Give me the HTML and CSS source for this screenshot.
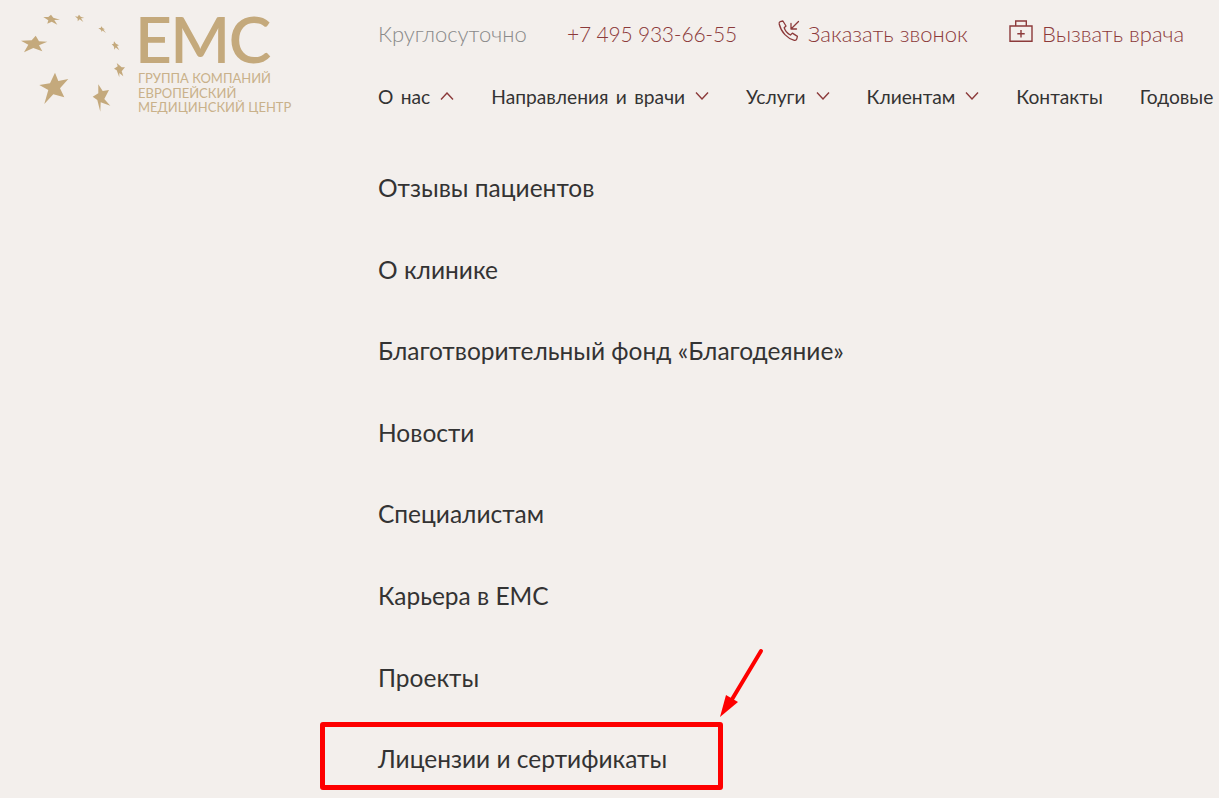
FILE: index.html
```html
<!DOCTYPE html>
<html lang="ru">
<head>
    <meta charset="UTF-8">
    <meta name="viewport" content="width=device-width, initial-scale=1.0">
    <title>EMC - О нас</title>
    <link rel="stylesheet" href="styles.css">
</head>
<body>
    <header class="site-header">
        <a class="logo">
            <svg class="logo-stars" viewBox="0 0 130 115" fill="#c4a97c">
                <polygon points="21,40.700 31.700,40.300 35.700,35.700 39,41.300 47.300,41.700 39,45.300 42.300,51.300 33.300,48 24,52.300 28.300,44.700"/>
                <polygon points="43.300,17 48.300,17 51,14.700 53.300,17.700 60,19.700 54.300,20 57.300,24.700 51.700,21.700 47.300,23.700 48.300,20.300"/>
                <polygon points="75,16.300 77.700,16.700 79,14.700 80.700,16.700 84.300,18 81,18.300 83.300,22 79.700,19.300 77.700,21.300 77.700,18.700"/>
                <polygon points="98.300,28 100.500,28 101.700,26.300 102.500,28 105,29.300 103.300,29.500 106,33 102.500,30.500 101.700,32 101,30"/>
                <polygon points="111.700,44 113.500,44 114,41.300 116,43.700 119,45.300 117,46 119.300,50.300 115.700,47.500 114.300,49.700 114,46.700"/>
                <polygon points="114,68.700 117.700,66.300 116.700,63 121.700,67.300 125,67.300 121.700,71.300 123.300,76.300 119.300,73 119.300,77.300 116.700,70.300"/>
                <polygon points="39.300,85 50,83.300 55,72.700 58.300,81 68.300,79 60,88.300 64.300,97.300 53.300,94.300 44.300,104 48.300,90"/>
                <polygon points="92.700,96.700 98.300,93.300 98.300,84.300 102.700,91 109,90 104.300,99 110.300,105.700 100.700,102.300 100.300,111.700 97.300,100"/>
            </svg>
            <div class="logo-text">
                <div class="logo-name">EMC</div>
                <div class="logo-caption">ГРУППА КОМПАНИЙ<br>ЕВРОПЕЙСКИЙ<br>МЕДИЦИНСКИЙ ЦЕНТР</div>
            </div>
        </a>
        <div class="header-main">
            <div class="contacts">
                <span class="hours">Круглосуточно</span>
                <span class="phone">+7 495 933-66-55</span>
                <a class="contact-link callback">
                    <svg class="icon-phone" viewBox="0 0 22 22" fill="none" stroke="currentColor" stroke-width="1.3" stroke-linejoin="round" stroke-linecap="round">
                        <path d="M2.2 1.6 4.9 1 8 6 6.2 7.800c.9 2.900 3.200 5.700 6.200 7.200l2-1.900 5 3.300-.7 2.700c-.3 1-1.300 1.400-2.400 1.200C9.500 18.600 3.100 12.200 1.200 4 1 3 1.300 2 2.200 1.600Z"/>
                        <path d="M20.500 1.500 13 9M13 3.500V9h5.500"/>
                    </svg>
                    Заказать звонок
                </a>
                <a class="contact-link doctor">
                    <svg class="icon-case" viewBox="0 0 24 22" fill="none" stroke="currentColor" stroke-width="1.4">
                        <path d="M1 6h22v15.300H1zM6.700 6V1h10.600v5"/>
                        <path d="M12 10v7.500M8.300 13.700h7.400"/>
                    </svg>
                    Вызвать врача
                </a>
            </div>
            <nav class="main-nav">
                <a class="nav-item">О нас <svg class="chevron" viewBox="0 0 14 8"><path d="M1 7.500 7 1l6 6.500"/></svg></a>
                <a class="nav-item">Направления и врачи <svg class="chevron" viewBox="0 0 14 8"><path d="M1 .5 7 7l6-6.500"/></svg></a>
                <a class="nav-item">Услуги <svg class="chevron" viewBox="0 0 14 8"><path d="M1 .5 7 7l6-6.500"/></svg></a>
                <a class="nav-item">Клиентам <svg class="chevron" viewBox="0 0 14 8"><path d="M1 .5 7 7l6-6.500"/></svg></a>
                <a class="nav-item">Контакты</a>
                <a class="nav-item">Годовые</a>
            </nav>
        </div>
    </header>

    <ul class="submenu">
        <li>Отзывы пациентов</li>
        <li>О клинике</li>
        <li>Благотворительный фонд «Благодеяние»</li>
        <li>Новости</li>
        <li>Специалистам</li>
        <li>Карьера в ЕМС</li>
        <li>Проекты</li>
        <li>Лицензии и сертификаты</li>
    </ul>

    <!-- annotation on top of the screenshot -->
    <div class="mark-box"></div>
    <svg class="mark-arrow" viewBox="0 0 50 80">
        <path d="M41 5 11 55" fill="none" stroke="#fe0000" stroke-width="4" stroke-linecap="round"/>
        <polygon points="0,71 6,49 18,56" fill="#fe0000"/>
    </svg>
</body>
</html>
```

FILE: styles.css
```css
* {
    margin: 0;
    padding: 0;
    box-sizing: border-box;
}

html,
body {
    height: 100%;
}

body {
    font-family: 'Lato', 'Noto Sans', sans-serif;
    background: #f3efec;
    color: #333333;
    position: relative;
    overflow: hidden;
}

.site-header {
    display: flex;
    height: 129px;
}

.logo {
    width: 378px;
    flex-shrink: 0;
    display: flex;
}

.logo-stars {
    width: 130px;
    height: 115px;
    flex-shrink: 0;
}

.logo-text {
    color: #c4a97c;
    margin-left: 8px;
    padding-top: 13px;
}

.logo-name {
    font-size: 64px;
    font-weight: 600;
    line-height: 52px;
    letter-spacing: -1.500px;
    margin-left: -3px;
}

.logo-caption {
    font-size: 13px;
    line-height: 14.500px;
    margin-top: 6px;
    white-space: nowrap;
    color: #c9b18a;
}

.header-main {
    white-space: nowrap;
}

.contacts {
    display: flex;
    align-items: center;
    height: 66px;
    font-size: 22px;
    font-weight: 300;
    color: #8c3a3a;
}

.hours {
    color: #8a8a8a;
    width: 189px;
}

.phone {
    width: 211px;
    font-size: 21px;
    letter-spacing: -0.2px;
}

.contact-link {
    display: flex;
    align-items: center;
}

.callback {
    width: 231px;
}

.icon-phone {
    width: 22px;
    height: 22px;
    margin-right: 8px;
    margin-top: -4px;
}

.icon-case {
    width: 24px;
    height: 22px;
    margin-right: 9px;
    margin-top: -5px;
}

.main-nav {
    display: flex;
    gap: 37px;
    height: 58px;
    padding-top: 17px;
    font-size: 19.200px;
    word-spacing: 2.500px;
    color: #333333;
}

.nav-item {
    display: flex;
    align-items: center;
    gap: 10px;
    height: 26px;
}

.chevron {
    width: 14px;
    height: 8px;
    fill: none;
    stroke: #8c3a3a;
    stroke-width: 1.400;
}

.submenu {
    list-style: none;
    padding-left: 378px;
    padding-top: 18px;
    font-size: 24.500px;
    color: #333333;
}

.submenu li {
    height: 81.600px;
    line-height: 81.600px;
}

.mark-box {
    position: absolute;
    left: 320px;
    top: 722px;
    width: 403px;
    height: 68px;
    border: 5px solid #fe0000;
    border-radius: 3px;
}

.mark-arrow {
    position: absolute;
    left: 720px;
    top: 646px;
    width: 50px;
    height: 80px;
}
```
